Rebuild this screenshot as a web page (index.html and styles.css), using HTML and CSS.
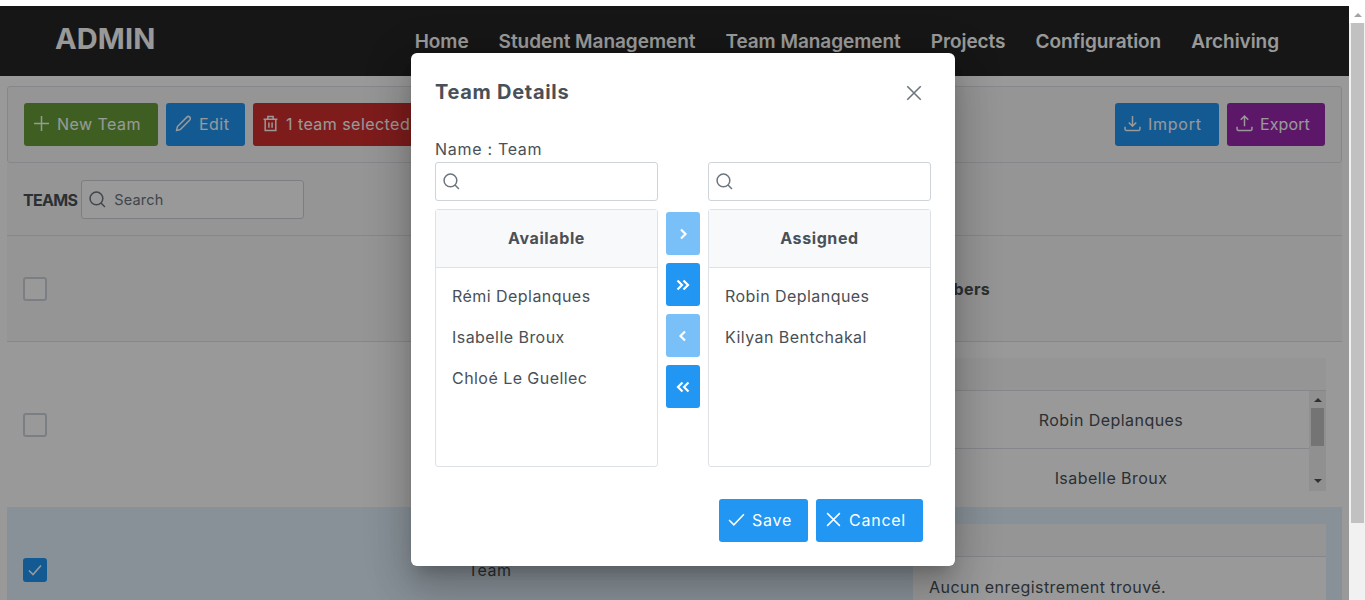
FILE: index.html
```html
<!DOCTYPE html>
<html lang="en">
<head>
  <meta charset="UTF-8">
  <meta name="viewport" content="width=device-width, initial-scale=1.0">
  <title>Teams | Admin</title>
  <link rel="stylesheet" href="styles.css">
</head>
<body>
  <div class="window">
    <div class="page">
      <header class="navbar">
        <div class="brand">ADMIN</div>
        <nav class="nav-links">
          <a href="#">Home</a>
          <a href="#">Student Management</a>
          <a href="#">Team Management</a>
          <a href="#">Projects</a>
          <a href="#">Configuration</a>
          <a href="#">Archiving</a>
        </nav>
      </header>

      <main class="content">
        <div class="toolbar">
          <div class="toolbar-group">
            <button class="btn btn-green">
              <svg class="icon" viewBox="0 0 16 16"><path d="M8 1v14M1 8h14"/></svg>New Team
            </button>
            <button class="btn btn-blue btn-edit">
              <svg class="icon" viewBox="0 0 16 16"><path d="M1.500 14.500l.8-3.600L11.200 2a1.900 1.900 0 0 1 2.700 2.700L5 13.700z"/></svg>Edit
            </button>
            <button class="btn btn-red">
              <svg class="icon" viewBox="0 0 16 16"><path d="M1.500 4h13M5.500 4V1.500h5V4M3 4v10.500h10V4M6.500 7v5M9.500 7v5"/></svg>1 team selected
            </button>
          </div>
          <div class="toolbar-group">
            <button class="btn btn-blue btn-import">
              <svg class="icon" viewBox="0 0 16 16"><path d="M8 1v9.500M4.500 7L8 10.500 11.500 7M1 11v2.500a1 1 0 0 0 1 1h12a1 1 0 0 0 1-1V11"/></svg>Import
            </button>
            <button class="btn btn-purple">
              <svg class="icon" viewBox="0 0 16 16"><path d="M8 10.500V1M4.500 4.500L8 1l3.500 3.500M1 11v2.500a1 1 0 0 0 1 1h12a1 1 0 0 0 1-1V11"/></svg>Export
            </button>
          </div>
        </div>

        <section class="teams">
          <div class="teams-head">
            <span class="teams-title">TEAMS</span>
            <div class="search search-wide">
              <svg class="icon search-icon" viewBox="0 0 16 16"><circle cx="7" cy="7" r="6"/><path d="M11.300 11.300l3.700 3.700"/></svg>
              <span class="placeholder">Search</span>
            </div>
          </div>

          <div class="row row-head">
            <div class="cell"><span class="check"></span></div>
            <div class="cell"></div>
            <div class="cell cell-bold">Members</div>
          </div>

          <div class="row">
            <div class="cell"><span class="check"></span></div>
            <div class="cell"></div>
            <div class="cell">
              <div class="members">
                <div class="members-head"></div>
                <div class="members-scroll">
                  <div class="members-rows">
                    <div class="member">Robin Deplanques</div>
                    <div class="member">Isabelle Broux</div>
                  </div>
                  <div class="mini-scrollbar">
                    <span class="arrow-up"></span>
                    <span class="mini-thumb"></span>
                    <span class="arrow-down"></span>
                  </div>
                </div>
              </div>
            </div>
          </div>

          <div class="row row-selected">
            <div class="cell">
              <span class="check check-on">
                <svg viewBox="0 0 16 16"><path d="M2 8.500l4 4 8-9"/></svg>
              </span>
            </div>
            <div class="cell">Team</div>
            <div class="cell">
              <div class="members">
                <div class="members-head"></div>
                <div class="members-empty">Aucun enregistrement trouvé.</div>
              </div>
            </div>
          </div>
        </section>
      </main>

      <div class="mask"></div>
    </div>

    <div class="scrollbar">
      <span class="arrow-up"></span>
      <span class="thumb"></span>
    </div>

    <div class="dialog">
      <div class="dialog-head">
        <h2>Team Details</h2>
        <svg class="icon close" viewBox="0 0 16 16"><path d="M2 2l12 12M14 2L2 14"/></svg>
      </div>
      <div class="dialog-name">Name : Team</div>
      <div class="picklist">
        <div class="pick-col">
          <div class="search">
            <svg class="icon search-icon" viewBox="0 0 16 16"><circle cx="7" cy="7" r="6"/><path d="M11.300 11.300l3.700 3.700"/></svg>
          </div>
          <div class="pick-box">
            <div class="pick-title">Available</div>
            <ul>
              <li>Rémi Deplanques</li>
              <li>Isabelle Broux</li>
              <li>Chloé Le Guellec</li>
            </ul>
          </div>
        </div>
        <div class="pick-actions">
          <button class="move move-off"><svg viewBox="0 0 16 16"><path d="M6 3.500L10.500 8 6 12.500"/></svg></button>
          <button class="move"><svg viewBox="0 0 16 16"><path d="M2.500 3.500L7 8l-4.500 4.500M8.500 3.500L13 8l-4.500 4.500"/></svg></button>
          <button class="move move-off"><svg viewBox="0 0 16 16"><path d="M10 3.500L5.500 8l4.500 4.500"/></svg></button>
          <button class="move"><svg viewBox="0 0 16 16"><path d="M7.500 3.500L3 8l4.500 4.500M13.500 3.500L9 8l4.500 4.500"/></svg></button>
        </div>
        <div class="pick-col">
          <div class="search">
            <svg class="icon search-icon" viewBox="0 0 16 16"><circle cx="7" cy="7" r="6"/><path d="M11.300 11.300l3.700 3.700"/></svg>
          </div>
          <div class="pick-box">
            <div class="pick-title">Assigned</div>
            <ul>
              <li>Robin Deplanques</li>
              <li>Kilyan Bentchakal</li>
            </ul>
          </div>
        </div>
      </div>
      <div class="dialog-foot">
        <button class="btn btn-blue btn-save">
          <svg class="icon" viewBox="0 0 16 16"><path d="M1 8.500l4.500 4.500L15 3"/></svg>Save
        </button>
        <button class="btn btn-blue btn-cancel">
          <svg class="icon" viewBox="0 0 16 16"><path d="M2 2l12 12M14 2L2 14"/></svg>Cancel
        </button>
      </div>
    </div>
  </div>
</body>
</html>
```

FILE: styles.css
```css
* {
  box-sizing: border-box;
}

html, body {
  height: 100%;
}

body {
  margin: 0;
  padding-top: 6px;
  background: #fff;
  color: #495057;
  font-family: "Inter", "Liberation Sans", sans-serif;
  font-size: 16px;
  letter-spacing: 0.45px;
  overflow: hidden;
}

.window {
  display: flex;
  height: 594px;
}

.page {
  position: relative;
  width: 1349px;
  height: 594px;
  overflow: hidden;
  flex: none;
}

.mask {
  position: absolute;
  inset: 0;
  background: rgba(0, 0, 0, 0.4);
}

/* window scrollbar */
.scrollbar {
  display: flex;
  flex-direction: column;
  width: 16px;
  padding: 0 1px 0 2px;
  background: linear-gradient(#fff 17px, #f1f1f1 17px);
  position: relative;
}

.scrollbar .arrow-up {
  margin: 7px auto 6px;
  border-bottom-color: #a3a3a3;
}

.thumb {
  display: block;
  height: 500px;
  background: #c1c1c1;
}

.arrow-up, .arrow-down {
  display: block;
  width: 0;
  height: 0;
  border-left: 4px solid transparent;
  border-right: 4px solid transparent;
}

.arrow-up {
  border-bottom: 4px solid #505050;
}

.arrow-down {
  border-top: 4px solid #505050;
}

/* navbar */
.navbar {
  display: flex;
  align-items: center;
  height: 70px;
  padding: 0 70px 0 55px;
  background: #252525;
}

.brand {
  margin-top: -5px;
  color: #fff;
  font-size: 29px;
  font-weight: 700;
  letter-spacing: 0.1px;
}

.nav-links {
  display: flex;
  gap: 30px;
  margin-left: auto;
}

.nav-links a {
  color: #fff;
  font-size: 19px;
  font-weight: 600;
  letter-spacing: -0.05px;
  text-decoration: none;
}

/* toolbar */
.content {
  padding: 10px 7px 0;
}

.toolbar {
  display: flex;
  justify-content: space-between;
  align-items: center;
  height: 77px;
  padding: 0 16px;
  background: #f8f9fa;
  border: 1px solid #dee2e6;
  border-radius: 3px;
}

.toolbar-group {
  display: flex;
  gap: 8px;
}

.btn {
  display: inline-flex;
  align-items: center;
  gap: 7px;
  height: 43px;
  padding: 0 0 2px 9px;
  border: none;
  border-radius: 3px;
  color: #fff;
  font: inherit;
  letter-spacing: inherit;
  white-space: nowrap;
}

.btn-green {
  width: 134px;
  background: #689f38;
}

.btn-blue {
  background: #2196f3;
}

.btn-edit {
  width: 79px;
}

.btn-red {
  width: 190px;
  background: #d32f2f;
}

.btn-import {
  width: 104px;
  letter-spacing: 0.75px;
}

.btn-purple {
  width: 98px;
  background: #9c27b0;
  letter-spacing: 0.1px;
}

.icon {
  flex: none;
  width: 17px;
  height: 17px;
  fill: none;
  stroke: currentColor;
  stroke-width: 1.4;
}

/* teams table */
.teams-head {
  display: flex;
  align-items: center;
  gap: 4px;
  height: 73px;
  padding: 0 16px;
  background: #f8f9fa;
  border-bottom: 1px solid #dee2e6;
}

.teams-title {
  padding-top: 1px;
  font-weight: 700;
  letter-spacing: -0.7px;
}

.search {
  display: flex;
  align-items: center;
  gap: 8px;
  height: 39px;
  padding: 0 7px;
  background: #fff;
  border: 1px solid #ced4da;
  border-radius: 3px;
  color: #6c757d;
}

.search-wide {
  width: 223px;
  font-size: 14.500px;
  letter-spacing: 0.2px;
}

.placeholder {
  padding-top: 1px;
}

.row {
  display: grid;
  grid-template-columns: repeat(3, 1fr);
  align-items: center;
  padding: 16px 0;
  background: #fff;
}

.row-head {
  height: 106px;
  background: #f8f9fa;
  border-bottom: 1px solid #dee2e6;
}

.row-selected {
  padding: 17px 0;
  background: #e3f2fd;
}

.cell {
  padding: 0 16px;
}

.cell-bold {
  font-weight: 700;
}

.check {
  display: flex;
  align-items: center;
  justify-content: center;
  width: 24px;
  height: 24px;
  background: #fff;
  border: 2px solid #ced4da;
  border-radius: 3px;
}

.check-on {
  background: #2196f3;
  border-color: #2196f3;
}

.check-on svg {
  width: 16px;
  height: 16px;
  fill: none;
  stroke: #fff;
  stroke-width: 1.6;
}

/* nested members table */
.members {
  background: #fff;
}

.members-head {
  height: 33px;
  background: #f8f9fa;
  border-bottom: 1px solid #dee2e6;
}

.members-scroll {
  display: flex;
  height: 100px;
  overflow: hidden;
}

.members-rows {
  flex: 1;
}

.member {
  display: flex;
  align-items: center;
  justify-content: center;
  height: 58px;
  border-bottom: 1px solid #dee2e6;
}

.mini-scrollbar {
  display: flex;
  flex-direction: column;
  align-items: center;
  width: 17px;
  background: #f1f1f1;
}

.mini-thumb {
  width: 13px;
  height: 38px;
  margin: 6px 0 33px;
  background: #c1c1c1;
}

.mini-scrollbar .arrow-up {
  margin-top: 7px;
}

.members-empty {
  display: flex;
  align-items: center;
  height: 59px;
  padding: 0 16px;
}

/* dialog */
.dialog {
  position: absolute;
  left: 411px;
  top: 53px;
  width: 544px;
  height: 513px;
  padding: 24px 24px 0;
  background: #fff;
  border-radius: 6px;
  box-shadow: 0 11px 15px -7px rgba(0, 0, 0, 0.2), 0 24px 38px 3px rgba(0, 0, 0, 0.14), 0 9px 46px 8px rgba(0, 0, 0, 0.12);
}

.dialog-head {
  display: flex;
  justify-content: space-between;
  align-items: center;
  height: 30px;
  padding-right: 8px;
}

.dialog-head h2 {
  margin: 0;
  font-size: 20px;
  font-weight: 700;
  letter-spacing: 0.7px;
}

.close {
  width: 18px;
  height: 18px;
  margin-top: 2px;
  color: #6c757d;
}

.dialog-name {
  margin: 30px 0 1px;
  line-height: 24px;
  letter-spacing: 0.7px;
}

.picklist {
  display: flex;
}

.pick-col {
  display: flex;
  flex-direction: column;
  gap: 8px;
  width: 223px;
}

.pick-box {
  height: 258px;
  border: 1px solid #dee2e6;
  border-radius: 3px;
}

.pick-title {
  display: flex;
  align-items: center;
  justify-content: center;
  height: 58px;
  padding-bottom: 2px;
  background: #f8f9fa;
  border-bottom: 1px solid #dee2e6;
  font-weight: 700;
  letter-spacing: 0.6px;
}

.pick-box ul {
  margin: 0;
  padding: 8px 0;
  list-style: none;
}

.pick-box li {
  height: 41px;
  padding: 0 16px;
  line-height: 41px;
}

.pick-actions {
  display: flex;
  flex-direction: column;
  gap: 8px;
  width: 50px;
  padding: 50px 8px 0;
}

.move {
  display: flex;
  align-items: center;
  justify-content: center;
  width: 34px;
  height: 43px;
  padding: 0;
  background: #2196f3;
  border: none;
  border-radius: 3px;
}

.move svg {
  width: 16px;
  height: 16px;
  fill: none;
  stroke: #fff;
  stroke-width: 2.2;
}

.move-off {
  background: #7ac0f8;
}

.dialog-foot {
  display: flex;
  justify-content: flex-end;
  gap: 8px;
  margin-top: 32px;
  padding-right: 8px;
}

.btn-save {
  width: 89px;
  letter-spacing: 0.75px;
}

.btn-cancel {
  width: 107px;
  letter-spacing: 0.75px;
}
```
